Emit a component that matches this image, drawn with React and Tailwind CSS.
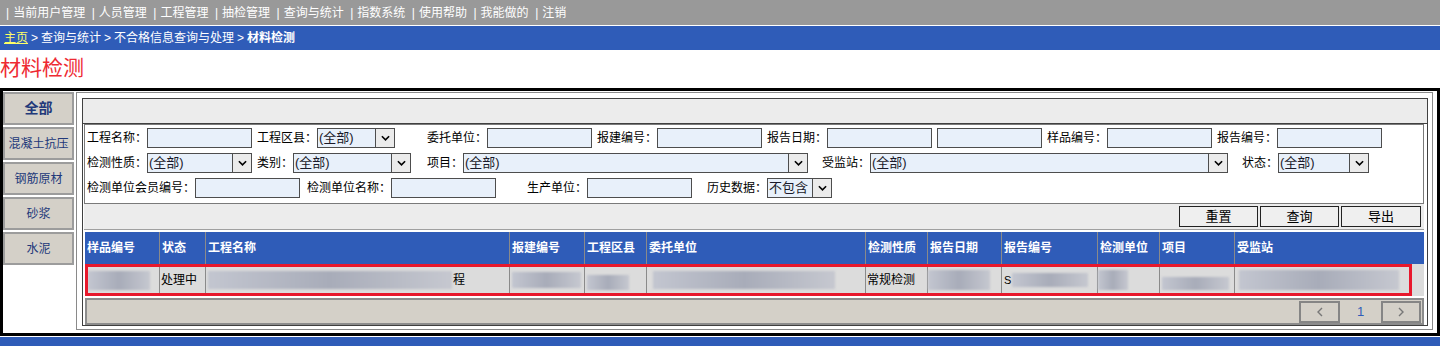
import React from 'react';

const menu = ['当前用户管理', '人员管理', '工程管理', '抽检管理', '查询与统计', '指数系统', '使用帮助', '我能做的', '注销'];
const tabs = ['全部', '混凝土抗压', '钢筋原材', '砂浆', '水泥'];

const cols = [
  ['样品编号', 'w-[74px]'],
  ['状态', 'w-[46px]'],
  ['工程名称', 'w-[304px]'],
  ['报建编号', 'w-[75px]'],
  ['工程区县', 'w-[62px]'],
  ['委托单位', 'w-[219px]'],
  ['检测性质', 'w-[62px]'],
  ['报告日期', 'w-[74px]'],
  ['报告编号', 'w-[96px]'],
  ['检测单位', 'w-[62px]'],
  ['项目', 'w-[75px]'],
  ['受监站', 'flex-1'],
];

function Chevron({ className }) {
  return (
    <svg viewBox="0 0 10 6" className={className} fill="none" stroke="currentColor" strokeWidth="1.8">
      <polyline points="1,1 5,5 9,1" />
    </svg>
  );
}

function Label({ text, className = '' }) {
  return <span className={`shrink-0 whitespace-nowrap text-[12px] ${className}`}>{text}</span>;
}

function Input({ className = '' }) {
  return <div className={`h-5 shrink-0 border border-[#4d4d4d] bg-[#e8f0fa] ${className}`} />;
}

function Select({ className = '', value = '(全部)' }) {
  return (
    <div className={`flex h-5 shrink-0 border border-[#4d4d4d] bg-[#e8f0fa] ${className}`}>
      <span className="flex-1 overflow-hidden whitespace-nowrap pl-px text-[13px] leading-[18px] text-[#1a1a2a]">{value}</span>
      <span className="flex w-[19px] items-center justify-center border-l border-[#4d4d4d] bg-[#ebebeb] text-black">
        <Chevron className="h-[6px] w-[9px]" />
      </span>
    </div>
  );
}

function Blur({ className = '' }) {
  return <span className={`block shrink-0 bg-linear-to-r from-[#c3c6d0] via-[#a8acb9] to-[#c6c8d0] blur-[1px] ${className}`} />;
}

export default function App() {
  return (
    <div className="h-[346px] w-[1440px] overflow-hidden bg-white font-['Liberation_Sans','Noto_Sans_CJK_SC',sans-serif] text-black">
      {/* top menu */}
      <div className="flex h-[25px] items-center bg-[#999999] pl-[6px] text-[12px] text-white">
        {menu.map((m) => (
          <React.Fragment key={m}>
            <span>|</span>
            <span className="ml-[4px] mr-[6.5px]">{m}</span>
          </React.Fragment>
        ))}
      </div>

      {/* breadcrumb */}
      <div className="mt-px flex h-[24px] items-center bg-[#2f5cb8] pl-[4px] text-[12px] text-white">
        <span className="text-[#ffff66] underline">主页</span>
        <span className="mx-[3px]">&gt;</span>
        <span>查询与统计</span>
        <span className="mx-[3px]">&gt;</span>
        <span>不合格信息查询与处理</span>
        <span className="mx-[3px]">&gt;</span>
        <span className="font-bold">材料检测</span>
      </div>

      <div className="h-[38px] pt-[4px] text-[21px] leading-[28px] text-[#ee2a32]">材料检测</div>

      {/* main frame */}
      <div className="flex h-[248px] border-[3px] border-black">
        <div className="flex w-[73px] shrink-0 flex-col gap-[2px] pt-px">
          {tabs.map((t, i) => (
            <div
              key={t}
              className={`flex h-[33px] w-[71px] items-center justify-center border-2 border-[#9c9c9c] bg-[#d4d0c8] text-[#22397a] ${
                i === 0 ? 'text-[14px] font-bold' : 'text-[12px]'
              }`}
            >
              {t}
            </div>
          ))}
        </div>

        <div className="mb-[3px] mr-[4px] mt-px w-[1357px] shrink-0 border border-[#8a8a8a] pb-[3px] pl-[5px] pr-[4px] pt-[5px]">
          <div className="h-full border border-[#404040]">
            <div className="h-[25px] border-b border-[#404040] bg-[#ececec]" />

            <div className="pl-px pr-[3px]">
              {/* filter form */}
              <div className="flex h-[80px] flex-col gap-[5px] border border-[#7a7a7a] pl-[2px] pt-[3px]">
                <div className="flex h-5 items-center">
                  <Label text="工程名称：" className="w-[60px]" />
                  <Input className="w-[105px]" />
                  <Label text="工程区县：" className="ml-[5px] w-[60px]" />
                  <Select className="w-[78px]" />
                  <Label text="委托单位：" className="ml-[32px] w-[60px]" />
                  <Input className="w-[105px]" />
                  <Label text="报建编号：" className="ml-[5px] w-[60px]" />
                  <Input className="w-[105px]" />
                  <Label text="报告日期：" className="ml-[5px] w-[60px]" />
                  <Input className="w-[105px]" />
                  <Input className="ml-[5px] w-[105px]" />
                  <Label text="样品编号：" className="ml-[5px] w-[60px]" />
                  <Input className="w-[105px]" />
                  <Label text="报告编号：" className="ml-[5px] w-[60px]" />
                  <Input className="w-[105px]" />
                </div>
                <div className="flex h-5 items-center">
                  <Label text="检测性质：" className="w-[60px]" />
                  <Select className="w-[105px]" />
                  <Label text="类别：" className="ml-[5px] w-[36px]" />
                  <Select className="w-[118px]" />
                  <Label text="项目：" className="ml-[16px] w-[36px]" />
                  <Select className="w-[345px]" />
                  <Label text="受监站：" className="ml-[14px] w-[48px]" />
                  <Select className="w-[358px]" />
                  <Label text="状态：" className="ml-[14px] w-[36px]" />
                  <Select className="w-[91px]" />
                </div>
                <div className="flex h-5 items-center">
                  <Label text="检测单位会员编号：" className="w-[108px]" />
                  <Input className="w-[105px]" />
                  <Label text="检测单位名称：" className="ml-[7px] w-[84px]" />
                  <Input className="w-[105px]" />
                  <Label text="生产单位：" className="ml-[31px] w-[60px]" />
                  <Input className="w-[105px]" />
                  <Label text="历史数据：" className="ml-[15px] w-[60px]" />
                  <Select className="w-[65px]" value="不包含" />
                </div>
              </div>

              {/* toolbar */}
              <div className="flex h-[26px] items-center justify-end gap-[2px] border-b border-[#a0a0a0] bg-[#ececec] pr-[3px]">
                {['重置', '查询', '导出'].map((b, i) => (
                  <button
                    key={b}
                    className={`flex h-[21px] items-center justify-center border border-[#222] bg-[#efefef] text-[13px] ${
                      i === 2 ? 'w-[80px]' : 'w-[79px]'
                    }`}
                  >
                    {b}
                  </button>
                ))}
              </div>

              {/* table */}
              <div className="ml-px mt-[2px]">
                <div className="flex h-[32px] bg-[#2f5cb8] text-[12px] font-bold text-white">
                  {cols.map(([c, w], i) => (
                    <div key={c} className={`flex items-center pl-[2px] ${w} ${i > 0 ? 'border-l border-[#8a8a8a]' : ''}`}>
                      {c}
                    </div>
                  ))}
                </div>

                <div className="relative flex h-[32px] bg-[#dcdcdc] text-[12px]">
                  <div className="flex w-[74px] items-center pl-[3px]">
                    <Blur className="h-[19px] w-[62px]" />
                  </div>
                  <div className="flex w-[46px] items-center border-l border-[#8a8a8a] pl-px">处理中</div>
                  <div className="flex w-[304px] items-center border-l border-[#8a8a8a] pl-[2px]">
                    <Blur className="h-[18px] w-[244px]" />
                    <span className="ml-px">程</span>
                  </div>
                  <div className="flex w-[75px] items-center border-l border-[#8a8a8a] pl-[2px]">
                    <Blur className="h-[16px] w-[69px]" />
                  </div>
                  <div className="flex w-[62px] items-center border-l border-[#8a8a8a] pl-[2px]">
                    <Blur className="mt-[4px] h-[15px] w-[42px]" />
                  </div>
                  <div className="flex w-[219px] items-center border-l border-[#8a8a8a] pl-[6px]">
                    <Blur className="h-[18px] w-[182px]" />
                  </div>
                  <div className="flex w-[62px] items-center border-l border-[#8a8a8a] pl-px">常规检测</div>
                  <div className="flex w-[74px] items-center border-l border-[#8a8a8a]">
                    <Blur className="h-[20px] w-[62px]" />
                  </div>
                  <div className="flex w-[96px] items-center border-l border-[#8a8a8a] pl-[2px]">
                    <span className="text-[11px]">S</span>
                    <Blur className="ml-px h-[14px] w-[76px]" />
                  </div>
                  <div className="flex w-[62px] items-center border-l border-[#8a8a8a]">
                    <Blur className="h-[20px] w-[30px]" />
                  </div>
                  <div className="flex w-[75px] items-center border-l border-[#8a8a8a] pl-[2px]">
                    <Blur className="mt-[6px] h-[13px] w-[67px]" />
                  </div>
                  <div className="flex flex-1 items-center border-l border-[#8a8a8a] pl-[4px]">
                    <Blur className="h-[20px] w-[160px]" />
                  </div>
                  <div className="pointer-events-none absolute left-0 top-0 h-full w-[1327px] border-[3px] border-[#e8182c]" />
                </div>
              </div>

              {/* pager */}
              <div className="ml-px mt-[2px] flex h-[27px] items-center justify-end border-2 border-[#8c8c8c] bg-[#d4d0c8] pr-px">
                <div className="flex h-[22px] w-[41px] items-center justify-center border-2 border-[#858585] text-[#777]">
                  <svg viewBox="0 0 6 10" className="h-[10px] w-[6px]" fill="none" stroke="currentColor" strokeWidth="1.4">
                    <polyline points="5,1 1,5 5,9" />
                  </svg>
                </div>
                <span className="w-[41px] text-center text-[13px] text-[#2f5cb8]">1</span>
                <div className="flex h-[22px] w-[40px] items-center justify-center border-2 border-[#858585] text-[#777]">
                  <svg viewBox="0 0 6 10" className="h-[10px] w-[6px]" fill="none" stroke="currentColor" strokeWidth="1.4">
                    <polyline points="1,1 5,5 1,9" />
                  </svg>
                </div>
              </div>
            </div>
          </div>
        </div>
      </div>

      <div className="mt-px h-[9px] bg-[#2f5cb8]" />
    </div>
  );
}
